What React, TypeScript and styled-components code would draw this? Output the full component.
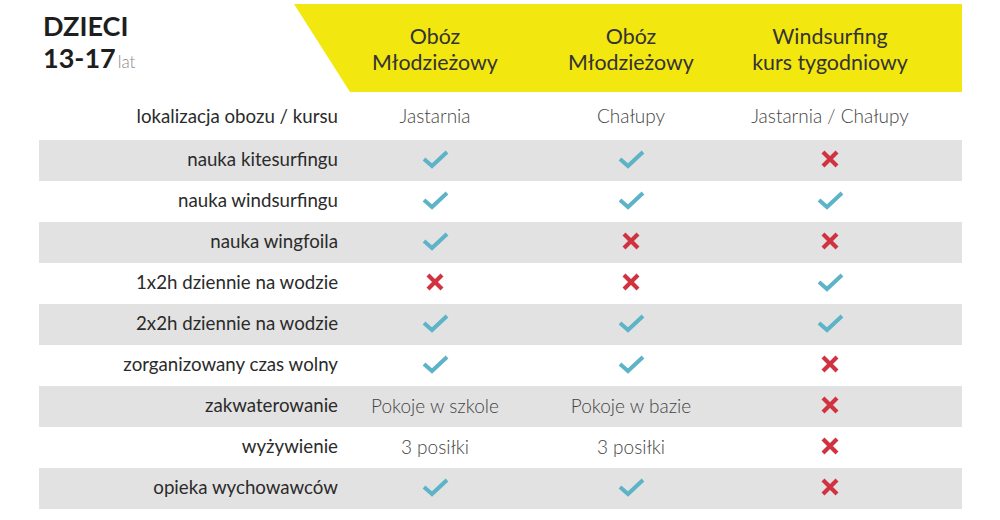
import React from "react";
import styled, { createGlobalStyle } from "styled-components";

const Global = createGlobalStyle`
  html, body { margin: 0; padding: 0; background: #fff; }
  body { font-family: Lato, "Liberation Sans", sans-serif; color: #2b2b2b; }
`;

const COLS = "299px 194px 198px 200px 32px";

const Page = styled.div`
  width: 1000px;
  height: 520px;
  padding: 4px 0 0 39px;
  box-sizing: border-box;
  overflow: hidden;
`;

const Header = styled.div`
  display: flex;
  width: 923px;
  height: 88px;
`;

const TitleBlock = styled.div`
  width: 255px;
  padding: 6px 0 0 4px;
  box-sizing: border-box;
`;

const TitleLine = styled.div`
  font-size: 27px;
  font-weight: 700;
  line-height: 32px;
  color: #1e1e1e;
`;

const Unit = styled.span`
  font-size: 17px;
  font-weight: 300;
  color: #8a8a8a;
  margin-left: 2px;
`;

const Yellow = styled.div`
  flex: 1;
  background: #f3e710;
  clip-path: polygon(0 0, 100% 0, 100% 100%, 56px 100%);
  display: grid;
  grid-template-columns: 44px 194px 198px 200px 32px;
  align-items: center;
`;

const HeadCell = styled.div<{ $col: number }>`
  grid-column: ${(p) => p.$col};
  text-align: center;
  font-size: 21.4px;
  line-height: 26px;
  color: #333;
  padding-top: 2px;
`;

const Table = styled.div`
  width: 923px;
  margin-top: 7px;
`;

const Row = styled.div<{ $shade: boolean }>`
  display: grid;
  grid-template-columns: ${COLS};
  height: 41px;
  box-sizing: border-box;
  align-items: center;
  background: ${(p) => (p.$shade ? "#e2e2e2" : "#fff")};
  &:first-child {
    padding-bottom: 5px;
  }
`;

const Label = styled.div`
  text-align: right;
  font-size: 18.7px;
  color: #2b2b2b;
  padding-bottom: 3px;
  white-space: nowrap;
`;

const Cell = styled.div`
  display: flex;
  justify-content: center;
  align-items: center;
  font-size: 19px;
  font-weight: 300;
  color: #444;
  padding-bottom: 3px;
  white-space: nowrap;
`;

const Check = () => (
  <svg width="28" height="20" viewBox="0 0 28 20">
    <path d="M3 10 L11 17 L26 3" fill="none" stroke="#5db3c7" strokeWidth="4" strokeLinecap="butt" strokeLinejoin="miter" />
  </svg>
);

const Cross = () => (
  <svg width="20" height="20" viewBox="0 0 20 20">
    <path d="M3 3 L17 17 M17 3 L3 17" fill="none" stroke="#d1323f" strokeWidth="4.2" />
  </svg>
);

type V = "y" | "n" | string;

const rows: { label: string; v: V[] }[] = [
  { label: "lokalizacja obozu / kursu", v: ["Jastarnia", "Chałupy", "Jastarnia / Chałupy"] },
  { label: "nauka kitesurfingu", v: ["y", "y", "n"] },
  { label: "nauka windsurfingu", v: ["y", "y", "y"] },
  { label: "nauka wingfoila", v: ["y", "n", "n"] },
  { label: "1x2h dziennie na wodzie", v: ["n", "n", "y"] },
  { label: "2x2h dziennie na wodzie", v: ["y", "y", "y"] },
  { label: "zorganizowany czas wolny", v: ["y", "y", "n"] },
  { label: "zakwaterowanie", v: ["Pokoje w szkole", "Pokoje w bazie", "n"] },
  { label: "wyżywienie", v: ["3 posiłki", "3 posiłki", "n"] },
  { label: "opieka wychowawców", v: ["y", "y", "n"] },
];

const renderValue = (v: V) => (v === "y" ? <Check /> : v === "n" ? <Cross /> : v);

export default function App() {
  return (
    <>
      <Global />
      <Page>
        <Header>
          <TitleBlock>
            <TitleLine>DZIECI</TitleLine>
            <TitleLine>
              13-17<Unit>lat</Unit>
            </TitleLine>
          </TitleBlock>
          <Yellow>
            <HeadCell $col={2}>
              Obóz
              <br />
              Młodzieżowy
            </HeadCell>
            <HeadCell $col={3}>
              Obóz
              <br />
              Młodzieżowy
            </HeadCell>
            <HeadCell $col={4}>
              Windsurfing
              <br />
              kurs tygodniowy
            </HeadCell>
          </Yellow>
        </Header>
        <Table>
          {rows.map((r, i) => (
            <Row key={r.label} $shade={i % 2 === 1}>
              <Label>{r.label}</Label>
              {r.v.map((v, j) => (
                <Cell key={j}>{renderValue(v)}</Cell>
              ))}
            </Row>
          ))}
        </Table>
      </Page>
    </>
  );
}
